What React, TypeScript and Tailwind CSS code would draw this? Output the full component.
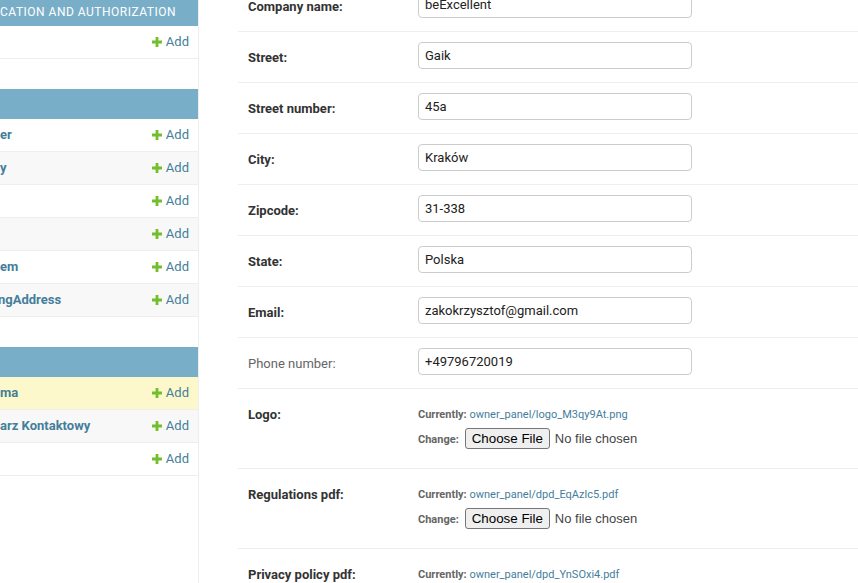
import React from "react";

const Plus = () => (
  <svg width="10" height="10" viewBox="0 0 10 10" className="shrink-0">
    <path d="M3.6 0h2.8v3.6H10v2.8H6.4V10H3.6V6.4H0V3.6h3.6z" fill="#70bf2b" />
  </svg>
);

type Row = { name: string; off?: number; bg?: string };

const Module = ({ title, rows }: { title: string; rows: Row[] }) => (
  <div className="mb-[30px]">
    <div className="flex items-center h-[30px] bg-[#79aec8] text-white text-[12px] uppercase tracking-[0.5px] whitespace-nowrap overflow-hidden">
      <span className="pt-[1px]">{title}</span>
    </div>
    {rows.map((r, i) => (
      <div
        key={i}
        className={`flex items-center justify-between h-[33px] border-b border-[#eee] pr-[9px] ${r.bg ?? ""}`}
      >
        <span
          className="text-[13px] font-bold text-[#447e9b] whitespace-nowrap"
          style={{ marginLeft: r.off ?? 0 }}
        >
          {r.name}
        </span>
        <span className="flex items-center gap-[4px] text-[13px] text-[#447e9b]">
          <Plus />
          <span>Add</span>
        </span>
      </div>
    ))}
  </div>
);

const TextRow = ({ label, value, required = true }: { label: string; value: string; required?: boolean }) => (
  <div className="flex items-start h-[51px] border-b border-[#eee] pl-[10px]">
    <div
      className={`w-[170px] shrink-0 pt-[18px] text-[13px] leading-4 ${required ? "font-bold text-[#333]" : "text-[#666]"}`}
    >
      {label}
    </div>
    <div className="pt-[10px]">
      <div className="w-[274px] h-[27px] border border-[#ccc] rounded-[4px] px-[6px] flex items-center text-[13px] text-[#222] bg-white">
        {value}
      </div>
    </div>
  </div>
);

const FileRow = ({ label, file }: { label: string; file: string }) => (
  <div className="flex items-start h-[80px] border-b border-[#eee] pl-[10px]">
    <div className="w-[170px] shrink-0 pt-[18px] text-[13px] leading-4 font-bold text-[#333]">{label}</div>
    <div className="pt-[16px] text-[11px] text-[#666]">
      <div className="leading-[20px]">
        <span className="font-bold">Currently:</span>{" "}
        <span className="text-[#447e9b]">{file}</span>
      </div>
      <div className="flex items-baseline mt-[3px]">
        <span className="font-bold mr-[6px]">Change:</span>
        <span className="inline-flex items-center h-[21px] px-[6px] border border-[#767676] rounded-[3px] bg-[#efefef] text-[13.33px] text-black font-['Liberation_Sans',Arial,sans-serif]">
          Choose File
        </span>
        <span className="ml-[5px] text-[13px] text-[#444] font-['Liberation_Sans',Arial,sans-serif]">
          No file chosen
        </span>
      </div>
    </div>
  </div>
);

export default function App() {
  return (
    <div className="flex w-[858px] h-[583px] overflow-hidden bg-white font-['Roboto',sans-serif]">
      <aside className="w-[199px] shrink-0 border-r border-[#eee] overflow-hidden">
        <div className="-mt-[4px]">
          <Module title="CATION AND AUTHORIZATION" rows={[{ name: "" }]} />
          <Module
            title=""
            rows={[
              { name: "er" },
              { name: "y", bg: "bg-[#f8f8f8]" },
              { name: "" },
              { name: "", bg: "bg-[#f8f8f8]" },
              { name: "em" },
              { name: "ngAddress", off: -2, bg: "bg-[#f8f8f8]" },
            ]}
          />
          <Module
            title=""
            rows={[
              { name: "ma", bg: "bg-[#fdf8cb]" },
              { name: "arz Kontaktowy", bg: "bg-[#f8f8f8]" },
              { name: "" },
            ]}
          />
        </div>
      </aside>
      <main className="flex-1 min-w-0 pl-[39px]">
        <div className="-mt-[19px]">
          <TextRow label="Company name:" value="beExcellent" />
          <TextRow label="Street:" value="Gaik" />
          <TextRow label="Street number:" value="45a" />
          <TextRow label="City:" value="Kraków" />
          <TextRow label="Zipcode:" value="31-338" />
          <TextRow label="State:" value="Polska" />
          <TextRow label="Email:" value="zakokrzysztof@gmail.com" />
          <TextRow label="Phone number:" value="+49796720019" required={false} />
          <FileRow label="Logo:" file="owner_panel/logo_M3qy9At.png" />
          <FileRow label="Regulations pdf:" file="owner_panel/dpd_EqAzlc5.pdf" />
          <FileRow label="Privacy policy pdf:" file="owner_panel/dpd_YnSOxi4.pdf" />
        </div>
      </main>
    </div>
  );
}
